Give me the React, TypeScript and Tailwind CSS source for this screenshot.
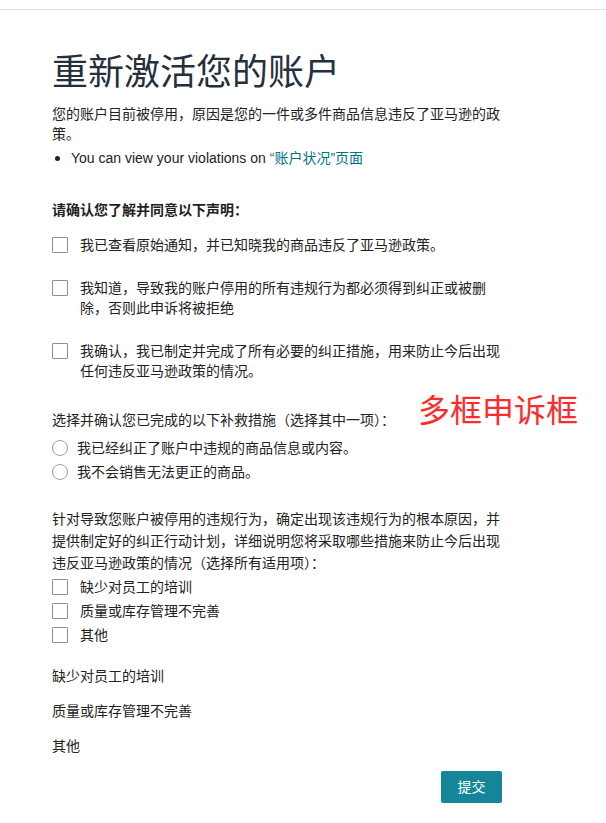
import React from "react";

const FONT = '"Liberation Sans", "Noto Sans CJK SC", Arial, sans-serif';

function Box() {
  return <span className="mt-[2px] block h-[16px] w-[16px] shrink-0 rounded-[1px] border border-[#8d9096] bg-white" />;
}

function Radio() {
  return <span className="block h-[16px] w-[16px] shrink-0 rounded-full border border-[#9aa0a6] bg-white" />;
}

export default function App() {
  return (
    <div className="relative min-h-[823px] bg-white text-[14px] text-[#222]" style={{ fontFamily: FONT }}>
      <div className="h-[9px]" />
      <div className="border-t border-[#dddddd]" />
      <div className="ml-[52px] w-[450px]">
        <h1 className="mt-[41px] text-[36px] leading-[44px] font-normal text-[#26303c]">重新激活您的账户</h1>
        <p className="mt-[9px] leading-[20px]">
          您的账户目前被停用，原因是您的一件或多件商品信息违反了亚马逊的政策。
        </p>
        <div className="mt-[4px] flex items-center leading-[20px]">
          <span className="ml-[3px] mr-[11px] block h-[5px] w-[5px] rounded-full bg-[#222]" />
          <span>
            You can view your violations on <span className="text-[#007185]">“账户状况”页面</span>
          </span>
        </div>

        <p className="mt-[32px] font-bold leading-[20px]">请确认您了解并同意以下声明：</p>

        <div className="mt-[15px] flex gap-[12px] leading-[20px]">
          <Box />
          <span>我已查看原始通知，并已知晓我的商品违反了亚马逊政策。</span>
        </div>
        <div className="mt-[23px] flex gap-[12px] leading-[20px]">
          <Box />
          <span>我知道，导致我的账户停用的所有违规行为都必须得到纠正或被删除，否则此申诉将被拒绝</span>
        </div>
        <div className="mt-[23px] flex gap-[12px] leading-[20px]">
          <Box />
          <span>我确认，我已制定并完成了所有必要的纠正措施，用来防止今后出现任何违反亚马逊政策的情况。</span>
        </div>

        <p className="mt-[29px] leading-[20px]">选择并确认您已完成的以下补救措施（选择其中一项）：</p>
        <div className="mt-[8px] flex items-center gap-[9px] leading-[20px]">
          <Radio />
          <span>我已经纠正了账户中违规的商品信息或内容。</span>
        </div>
        <div className="mt-[4px] flex items-center gap-[9px] leading-[20px]">
          <Radio />
          <span>我不会销售无法更正的商品。</span>
        </div>

        <p className="mt-[26px] leading-[22px]">
          针对导致您账户被停用的违规行为，确定出现该违规行为的根本原因，并提供制定好的纠正行动计划，详细说明您将采取哪些措施来防止今后出现违反亚马逊政策的情况（选择所有适用项）：
        </p>
        <div className="mt-[3px] flex flex-col gap-[4px] leading-[20px]">
          <div className="flex gap-[12px]">
            <Box />
            <span>缺少对员工的培训</span>
          </div>
          <div className="flex gap-[12px]">
            <Box />
            <span>质量或库存管理不完善</span>
          </div>
          <div className="flex gap-[12px]">
            <Box />
            <span>其他</span>
          </div>
        </div>

        <div className="mt-[21px] flex flex-col gap-[15px] leading-[20px]">
          <p>缺少对员工的培训</p>
          <p>质量或库存管理不完善</p>
          <p>其他</p>
        </div>

        <div className="mt-[15px] flex justify-end">
          <button className="h-[32px] w-[61px] rounded-[2px] bg-[#15869a] text-[14px] text-white">提交</button>
        </div>
      </div>

      <div className="absolute left-[418px] top-[395px] text-[32px] leading-[32px] text-[#ff2a2a]">多框申诉框</div>
    </div>
  );
}
